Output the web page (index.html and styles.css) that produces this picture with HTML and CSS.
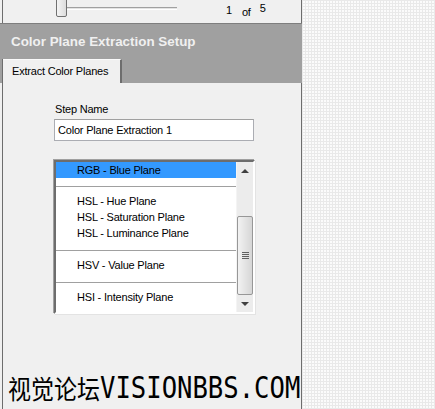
FILE: index.html
```html
<!DOCTYPE html>
<html lang="en">
  <head>
    <meta charset="UTF-8" />
    <meta name="viewport" content="width=device-width, initial-scale=1.0" />
    <title>Color Plane Extraction Setup</title>
    <link rel="stylesheet" href="styles.css">
  </head>
  <body>
    <div class="screen">
      <div class="panel">
        <!-- step slider -->
        <div class="topbar">
          <div class="slider">
            <div class="track"></div>
            <div class="thumb"></div>
          </div>
          <div class="counter">
            <span class="cur">1</span>
            <span class="of">of</span>
            <span class="total">5</span>
          </div>
        </div>

        <!-- setup header with tab -->
        <div class="header">
          <div class="title">Color Plane Extraction Setup</div>
          <div class="tabs">
            <div class="tab">Extract Color Planes</div>
          </div>
        </div>

        <!-- tab content -->
        <div class="content">
          <label class="field-label" for="stepName">Step Name</label>
          <div class="input" id="stepName">Color Plane Extraction 1</div>

          <div class="listbox">
            <div class="items">
              <div class="group first">
                <div class="item selected">RGB - Blue Plane</div>
              </div>
              <div class="group">
                <div class="item">HSL - Hue Plane</div>
                <div class="item">HSL - Saturation Plane</div>
                <div class="item">HSL - Luminance Plane</div>
              </div>
              <div class="group">
                <div class="item">HSV - Value Plane</div>
              </div>
              <div class="group last">
                <div class="item">HSI - Intensity Plane</div>
              </div>
            </div>
            <div class="scrollbar">
              <div class="sb-btn"><span class="arrow up"></span></div>
              <div class="sb-track">
                <div class="sb-thumb">
                  <span class="grip"></span>
                </div>
              </div>
              <div class="sb-btn"><span class="arrow down"></span></div>
            </div>
          </div>

          <div class="watermark"><span class="cn">视觉论坛</span><span class="en">VISIONBBS.COM</span></div>
        </div>
      </div>
      <div class="backdrop"></div>
    </div>
  </body>
</html>
```

FILE: styles.css
```css
/* General reset */
* {
  margin: 0;
  padding: 0;
  box-sizing: border-box;
}

body {
  width: 435px;
  height: 409px;
  overflow: hidden;
  font-family: "Liberation Sans", Arial, sans-serif;
  font-size: 11px;
  letter-spacing: -0.2px;
  color: #000;
  background: #f0f0f0;
}

.screen {
  display: flex;
  height: 409px;
}

/* Left setup panel */
.panel {
  width: 302px;
  display: flex;
  flex-direction: column;
  background: #f0f0f0;
}

.topbar,
.content {
  margin-left: 2px;
  border-left: 1px solid #6d6d6d;
  border-right: 1px solid #6d6d6d;
}

/* Slider row */
.topbar {
  height: 23px;
  display: flex;
  align-items: flex-start;
}

.slider {
  position: relative;
  width: 124px;
  height: 18px;
  margin-left: 50px;
}

.slider .track {
  position: absolute;
  left: 8px;
  right: 0;
  top: 7px;
  height: 3px;
  border-top: 1px solid #a0a0a0;
  border-bottom: 1px solid #fff;
  background: #e3e3e3;
}

.slider .thumb {
  position: absolute;
  left: 3px;
  top: -2px;
  width: 11px;
  height: 19px;
  border: 1px solid #707070;
  border-radius: 2px;
  background: linear-gradient(90deg, #f4f4f4, #dcdcdc);
}

.counter {
  display: flex;
  margin-left: 49px;
  font-size: 11px;
}

.counter .cur {
  margin-top: 4px;
}

.counter .of {
  margin-top: 6px;
  margin-left: 10px;
}

.counter .total {
  margin-top: 2px;
  margin-left: 9px;
}

/* Gray header */
.header {
  background: #a0a0a0;
  border-top: 1px solid #7e7e7e;
}

.title {
  height: 35px;
  line-height: 35px;
  padding-left: 11px;
  font-size: 13.4px;
  font-weight: bold;
  letter-spacing: 0;
  color: #f0f0f0;
}

.tabs {
  height: 24px;
  margin-left: 2px;
  border-left: 1px solid #6d6d6d;
  display: flex;
}

.tab {
  width: 119px;
  padding-left: 9px;
  line-height: 22px;
  background: #f0f0f0;
  border-top: 1px solid #fafafa;
  border-right: 2px solid #6d6d6d;
}

/* Tab content */
.content {
  flex: 1;
  display: flex;
  flex-direction: column;
  padding-left: 51px;
  padding-top: 20px;
}

.field-label {
  display: block;
  margin-left: 1px;
  line-height: 13px;
}

.input {
  width: 200px;
  height: 22px;
  margin-top: 3px;
  padding-left: 3px;
  line-height: 20px;
  background: #fff;
  border: 1px solid #abadb3;
  border-top-color: #a0a0a0;
}

/* List box */
.listbox {
  width: 201px;
  height: 154px;
  margin-top: 19px;
  display: flex;
  background: #fff;
  border: 2px solid;
  border-color: #6d6d6d #fff #fff #6d6d6d;
  box-shadow: -1px -1px 0 #a0a0a0, 1px 1px 0 #e3e3e3;
}

.items {
  flex: 1;
  overflow: hidden;
}

.group {
  padding: 6px 0 9px;
  border-bottom: 1px solid #a0a0a0;
}

.group.first {
  padding: 0 0 8px;
}

.group.last {
  border-bottom: none;
}

.item {
  height: 16px;
  line-height: 16px;
  padding-left: 21px;
}

.item.selected {
  background: #3399ff;
}

/* Scroll bar */
.scrollbar {
  width: 17px;
  display: flex;
  flex-direction: column;
  background: #ececec;
  border-left: 1px solid #f4f4f4;
}

.sb-btn {
  height: 17px;
  display: flex;
  align-items: center;
  justify-content: center;
}

.arrow {
  width: 0;
  height: 0;
  border-left: 4px solid transparent;
  border-right: 4px solid transparent;
}

.arrow.up {
  border-bottom: 4px solid #404040;
}

.arrow.down {
  border-top: 4px solid #404040;
}

.sb-track {
  flex: 1;
  padding-top: 37px;
  padding-bottom: 0;
}

.sb-thumb {
  height: 79px;
  display: flex;
  align-items: center;
  justify-content: center;
  border: 1px solid #979797;
  border-radius: 2px;
  background: linear-gradient(90deg, #f2f2f2, #d6d6d6);
}

.grip {
  width: 7px;
  height: 7px;
  background: repeating-linear-gradient(#606060 0 1px, transparent 1px 2px);
}

/* Watermark */
.watermark {
  margin-top: auto;
  margin-left: -46px;
  margin-bottom: 5px;
  height: 30px;
  display: flex;
  align-items: flex-end;
  white-space: nowrap;
  letter-spacing: 0;
  transform: scaleY(1.15);
  transform-origin: bottom left;
}

.watermark .cn {
  font-family: "Noto Sans CJK SC", sans-serif;
  font-size: 23px;
  line-height: 28px;
}

.watermark .en {
  font-family: "DejaVu Sans Mono", monospace;
  font-size: 25.6px;
  line-height: 28px;
}

/* Dotted backdrop */
.backdrop {
  flex: 1;
  background-color: #fbfbfb;
  background-image:
    linear-gradient(90deg, #e9e9e9 1px, transparent 1px),
    linear-gradient(#e9e9e9 1px, transparent 1px);
  background-size: 3px 3px;
}
```
